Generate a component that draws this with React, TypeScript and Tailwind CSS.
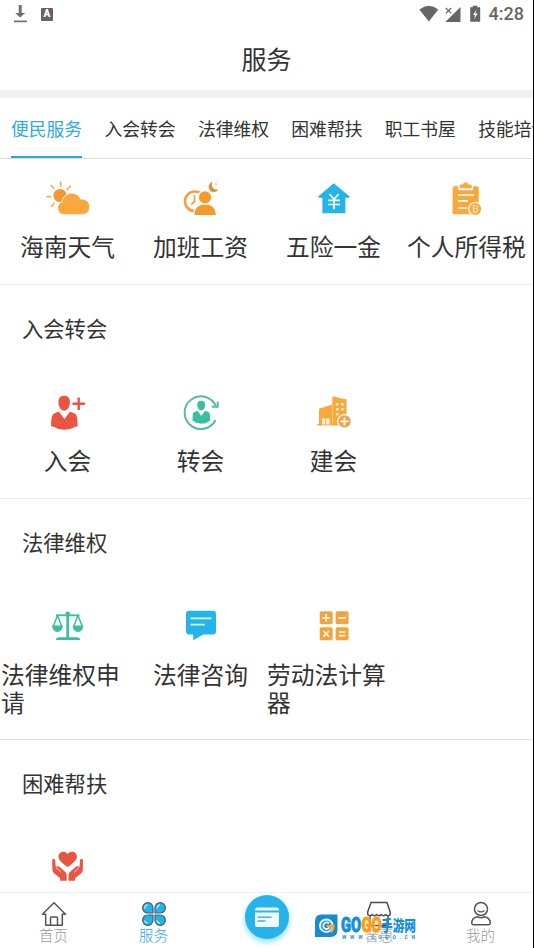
import React, { useState } from "react";

const ORANGE = "#f9a83e";
const RED = "#ea5442";
const GREEN = "#3bbfa0";
const BLUE = "#22b4ea";

const Icon = ({ children }: { children: React.ReactNode }) => (
    <svg viewBox="0 0 44 44" className="h-11 w-11 overflow-visible" fill="none">
        {children}
    </svg>
);

const WeatherIcon = () => (
    <Icon>
        <g stroke="#ecb56c" strokeWidth="1.8">
            <path d="M14.7 4.5v5.5M4.8 8.2l3.4 3.6M24.8 8.8l-4.2 4.2M.3 19.7h5M5 29.8l3.5-3.8" />
        </g>
        <circle cx="14" cy="18.5" r="6.6" fill="#f5992e" />
        <path
            d="M18.5 37.8a6.8 6.8 0 0 1-2.6-13.1C17 19.3 21.3 15.8 26.2 16.1c4.2.2 7.2 2.5 8.6 6 5.2-.6 9 3.3 9 7.8 0 4.6-3.4 7.9-7.8 7.9z"
            fill={ORANGE}
            stroke="white"
            strokeWidth="1"
        />
    </Icon>
);

const OvertimeIcon = () => (
    <Icon>
        <circle cx="15.8" cy="24.3" r="9.8" stroke="#f0a043" strokeWidth="2.6" />
        <path d="M15.5 18v6.5l-3.3 3" stroke="#f0a043" strokeWidth="1.7" />
        <path
            d="M14.7 38.8c0-7.8 4.5-12 11.5-12s11.3 4.2 11.3 12z"
            fill="#f59a2c"
            stroke="white"
            strokeWidth="1.4"
        />
        <circle cx="26" cy="20.4" r="6.8" fill="#f59a2c" stroke="white" strokeWidth="1.4" />
        <path d="M33.5 4.8c-3.3.8-4.8 5-2.8 8.2 2.1 3.2 6.8 2.7 8.4-.6-5 1.2-7.5-3.9-5.6-7.6z" fill="#dd9338" />
        <path d="M37 5.5v3M35.5 7h3" stroke="#eac08a" strokeWidth=".8" />
    </Icon>
);

const FundIcon = () => (
    <Icon>
        <path d="M21.8 6.2 37.6 19.6q.4 1.4-1.2 1.2h-3v15.4h-23V20.8h-3q-1.6.1-1.2-1.2z" fill={BLUE} />
        <path
            d="m17.5 17 4.6 5.2 4.6-5.2M22.1 22.2v10M16.2 23.3H28M16.2 27.5H28"
            stroke="white"
            strokeWidth="1.7"
        />
    </Icon>
);

const TaxIcon = () => (
    <Icon>
        <path
            d="M9.2 9.3h4v2.6q0 1.3 1.3 1.3h12.3q1.3 0 1.3-1.3V9.3h4q1.6 0 1.6 1.6v24.8q0 1.6-1.6 1.6H9.2q-1.6 0-1.6-1.6V10.9q0-1.6 1.6-1.6z"
            fill={ORANGE}
        />
        <path d="M14.7 11.3V8.5q0-1 1-1H18q.4-2.2 2.7-2.2t2.7 2.2h2.3q1 0 1 1v2.8z" fill={ORANGE} />
        <path d="M13 18h16M13 23.8h10M13 31h9" stroke="white" strokeWidth="1.7" />
        <circle cx="30.3" cy="32" r="6.5" fill={ORANGE} stroke="white" strokeWidth="1.2" />
        <path
            d="M28.4 28.7h2.5q1.7 0 1.7 1.5t-1.7 1.6h-2.5 2.7q1.8 0 1.8 1.6t-1.8 1.7h-2.7z"
            stroke="#fde6c4"
            strokeWidth="1.1"
        />
    </Icon>
);

const JoinIcon = () => (
    <Icon>
        <path
            d="M18.2 4.8c3.8 0 6 2.7 5.7 6.7-.1 4.2-2.5 8.3-5.7 8.3s-5.6-4.1-5.7-8.3c-.3-4 1.9-6.7 5.7-6.7z"
            fill={RED}
        />
        <path
            d="M13 20.7 18.5 28l5.4-7.3c3.9 1.2 6.3 2.1 6.8 4.3.7 3 1.1 7 .9 10.3-3.3 1-3.7.8-5 1.7-4.5 2.3-12 2.3-16.5 0-1-.8-1.6-.6-5-1.7-.1-3.3.2-7.3 1-10.3.5-2.2 3-3.1 6.9-4.3z"
            fill={RED}
        />
        <path d="M32.7 6.5v12.4M26.5 12.7h12.4" stroke={RED} strokeWidth="2.4" />
    </Icon>
);

const TransferIcon = () => (
    <Icon>
        <path d="M36.5 29A16.3 16.3 0 1 1 37 15.5" stroke="#5cb9a0" strokeWidth="2" />
        <path d="M32.7 15.8h6V10.6" stroke="#5cb9a0" strokeWidth="2" />
        <path
            d="M22.2 9.8c2.9 0 4.1 2 3.9 4.5-.1 2.9-1.9 5.2-3.9 5.2s-3.8-2.3-3.9-5.2c-.2-2.5 1-4.5 3.9-4.5z"
            fill={GREEN}
        />
        <path
            d="M18.6 19.7 22.3 25l3.7-5.3c3 .9 4.4 1.5 4.7 3 .5 2.2.5 5 .4 7.1-2.4.8-2 1-3.2 1.7-3 1.6-8.2 1.6-11.2 0-1-.7-.7-.9-3.1-1.7-.1-2.1 0-4.9.4-7.1.4-1.5 1.6-2.1 4.6-3z"
            fill={GREEN}
        />
    </Icon>
);

const BuildIcon = () => (
    <Icon>
        <path d="M5.4 34.5V33H7V17.8l13.3-4.2V5.3l14.3 3.2v26z" fill={ORANGE} />
        <path d="M20.6 13.5v20" stroke="#fcd9a6" strokeWidth=".7" />
        <path d="M10 27.5h3.3v6H10zM14.2 27.5h3.3v6h-3.3z" fill="#fff3df" />
        <path
            d="M24 12h2.6v2.6H24zM29 12h2.6v2.6H29zM24 17h2.6v2.6H24zM29 17h2.6v2.6H29zM24 22h2.6v2.6H24z"
            fill="#ffe9c8"
        />
        <circle cx="32.5" cy="30.4" r="6.8" fill="#f0a344" stroke="white" strokeWidth="1.2" />
        <path d="M32.5 26.4v8M28.5 30.4h8" stroke="white" strokeWidth="1.7" />
    </Icon>
);

const ScaleIcon = () => (
    <Icon>
        <path d="M10 35q0-2.8 3-2.8h18q3 0 3 2.8z" fill={GREEN} />
        <path d="M21.7 7v26" stroke={GREEN} strokeWidth="2.8" />
        <circle cx="21.7" cy="8.8" r="2.3" fill={GREEN} />
        <path d="M10 10.3h23.5" stroke={GREEN} strokeWidth="1.9" />
        <path
            d="M11.5 10.5 7.2 21.5M11.5 10.5l4.3 11M32 10.5l-4.3 11M32 10.5l4.3 11"
            stroke={GREEN}
            strokeWidth="1.5"
        />
        <path d="M6.2 20.5h10.6c0 8.6-10.6 8.6-10.6 0zM26.7 20.5h10.6c0 8.6-10.6 8.6-10.6 0z" fill={GREEN} />
    </Icon>
);

const ConsultIcon = () => (
    <Icon>
        <path
            d="M10 5.8h24q3 0 3 3v17.7q0 3-3 3h-9.5L14.2 35.3v-5.8H10q-3 0-3-3V8.8q0-3 3-3z"
            fill={BLUE}
        />
        <path d="M11.5 13.3h21M11.5 19.6h14.3" stroke="#dff5ff" strokeWidth="1.8" />
    </Icon>
);

const CalculatorIcon = () => (
    <Icon>
        <g fill="#f0a540">
            <rect x="7.7" y="6.3" width="13" height="13" rx="1.8" />
            <rect x="23.6" y="6.3" width="13" height="13" rx="1.8" />
            <rect x="7.7" y="22.3" width="13" height="13" rx="1.8" />
            <rect x="23.6" y="22.3" width="13" height="13" rx="1.8" />
        </g>
        <path
            d="M14.2 9v7.6M10.4 12.8H18M26.3 12.8h7.6M11.5 26l5.4 5.6M16.9 26l-5.4 5.6M27 27.2h6.3M27 30.6h6.3"
            stroke="#fff3e0"
            strokeWidth="1.7"
        />
    </Icon>
);

const CareIcon = () => (
    <Icon>
        <path
            d="M21.7 21C16.5 17.3 12.5 14.2 12.5 10.4c0-4.9 6.4-6.4 9.2-2.5 2.8-3.9 9.2-2.4 9.2 2.5 0 3.8-4 6.900-9.200 10.600z"
            fill={RED}
        />
        <path
            d="M7.7 13c1.2 0 1.5.7 1.5 1.6l.5 6.2c2.2-1.3 3.5-.5 5.4 1.4l3.900 3.600c1.300 1.200 1.700 2 1.700 3.700v5.200h-6.500v-2.500l-6-4.800c-1.300-1-1.700-1.800-1.800-3.300l-.2-9.300c0-1.100.3-1.800 1.500-1.800z"
            fill={RED}
        />
        <path
            d="M35.5 13c-1.2 0-1.5.7-1.5 1.6l-.5 6.2c-2.2-1.3-3.5-.5-5.4 1.4l-3.900 3.600c-1.300 1.200-1.700 2-1.700 3.700v5.200H29v-2.500l6-4.800c1.300-1 1.700-1.800 1.800-3.300l.2-9.300c0-1.100-.3-1.800-1.500-1.800z"
            fill={RED}
        />
        <path d="m10 21.500 5 4.800M33.200 21.500l-5 4.800" stroke="white" strokeWidth=".7" />
    </Icon>
);

const tabs = ["便民服务", "入会转会", "法律维权", "困难帮扶", "职工书屋", "技能培训"];

const sections = [
    {
        title: "",
        items: [
            { label: "海南天气", icon: <WeatherIcon /> },
            { label: "加班工资", icon: <OvertimeIcon /> },
            { label: "五险一金", icon: <FundIcon /> },
            { label: "个人所得税", icon: <TaxIcon /> },
        ],
    },
    {
        title: "入会转会",
        items: [
            { label: "入会", icon: <JoinIcon /> },
            { label: "转会", icon: <TransferIcon /> },
            { label: "建会", icon: <BuildIcon /> },
        ],
    },
    {
        title: "法律维权",
        items: [
            { label: "法律维权申请", icon: <ScaleIcon /> },
            { label: "法律咨询", icon: <ConsultIcon /> },
            { label: "劳动法计算器", icon: <CalculatorIcon /> },
        ],
    },
    {
        title: "困难帮扶",
        items: [{ label: "", icon: <CareIcon /> }],
    },
];

const StatusBar = () => (
    <div className="flex h-7 shrink-0 items-center justify-between pr-[9px] pl-[13px] text-[#666]">
        <div className="flex items-center gap-[13px]">
            <svg width="15" height="20" viewBox="0 0 15 20" fill="#707070">
                <path d="M5.7 1h3v8h3.5L7.2 13.5 2.2 9h3.500zM1 16.500h13v1.700H1z" />
            </svg>
            <span className="flex h-[13px] w-3 items-center justify-center rounded-[1px] bg-[#636363] font-['Roboto'] text-[10px] leading-none font-black text-white">
                A
            </span>
        </div>
        <div className="flex items-center">
            <svg width="62" height="20" viewBox="0 0 62 20" fill="#666">
                <path d="M.3 5.500Q10-1.800 19.300 5.500L9.900 17.500z" />
                <path d="M41.500 3v15H26.300z" />
                <path d="m26.800 4 5.400 5.400M32.200 4l-5.400 5.400" stroke="#666" strokeWidth="1.2" />
                <path d="M51.200 3.200h2.600V1.800h4.600v1.400h2.800v14.600h-10z" />
                <path d="M57.500 5.500 54 11h2.200L55 15.500l3.600-6h-2.200z" fill="white" />
            </svg>
            <span className="ml-2 font-['Roboto'] text-[18px] leading-none font-medium">4:28</span>
        </div>
    </div>
);

const HomeIcon = () => (
    <svg width="26" height="26" viewBox="0 0 26 26" fill="none" stroke="#555" strokeWidth="1.5" strokeLinejoin="round">
        <path d="M4.7 13.2H1.500L13 1.800l11.500 11.400h-3.200v11H4.700zM9.500 24v-7q0-1 1-1h5q1 0 1 1v7" />
    </svg>
);

const CloverIcon = () => (
    <svg width="26" height="26" viewBox="0 0 26 26" fill={BLUE} stroke="#4c5d69" strokeWidth="1.2">
        <path d="M12 12H6.800A5.200 5.200 0 1 1 12 6.800zM14 12h5.200A5.200 5.200 0 1 0 14 6.800zM12 14H6.800A5.200 5.200 0 1 0 12 19.200zM14 14h5.200A5.200 5.200 0 1 1 14 19.200z" />
        <path
            d="M3.700 7.500q0-3 3-3.600M16 7.500q0-3 3-3.600M3.700 19.500q.3 2.300 3 2.700M16 19.500q.3 2.300 3 2.700"
            fill="none"
            stroke="#c5ecfa"
            strokeWidth="1.3"
        />
    </svg>
);

const ShopIcon = () => (
    <svg width="26" height="26" viewBox="0 0 26 26" fill="none" stroke="#4d4d4d" strokeWidth="1.5" strokeLinejoin="round">
        <path d="M5 1.500h16l3.200 9.500v2.500q-2.200 2.500-4.500 0-2.200 2.500-4.500 0-2.200 2.500-4.500 0-2.200 2.500-4.500 0-2.200 2.500-4.500 0V11zM4 15.500v9h18v-9" />
    </svg>
);

const UserIcon = () => (
    <svg width="26" height="26" viewBox="0 0 26 26" fill="none" stroke="#555" strokeWidth="1.5" strokeLinejoin="round">
        <circle cx="13" cy="8" r="6.500" />
        <path d="M9.500 9.500q3.500 2.800 7 0" strokeWidth="1.1" />
        <path d="M9.200 15.700q-5.500 1.500-5.500 6.300 0 1.700 1.700 1.700h15.200q1.700 0 1.700-1.700 0-4.800-5.500-6.300-3.800 2.200-7.600 0z" />
    </svg>
);

const NavItem = ({ icon, label, active = false }: { icon: React.ReactNode; label: string; active?: boolean }) => (
    <button className="flex flex-col items-center pt-2">
        {icon}
        <span className={`-mt-px text-[14.5px] leading-[18px] font-light ${active ? "text-[#22a7dc]" : "text-[#999]"}`}>
            {label}
        </span>
    </button>
);

const Watermark = () => (
    <svg
        className="absolute top-[20px] left-[314px]"
        width="104"
        height="28"
        viewBox="0 0 104 28"
        fontFamily="Roboto, Noto Sans CJK SC, sans-serif"
        fontWeight="900"
    >
        <path d="M7.500 1.500H23.500v15.500q0 7-7 7H1V8.500q0-7 6.500-7z" fill="#168bd0" />
        <circle cx="12.300" cy="12.700" r="6.300" fill="none" stroke="#e9f7ff" strokeWidth="2" />
        <path d="M15 10.500a3.300 3.300 0 1 0 .5 3.700" fill="none" stroke="#e9f7ff" strokeWidth="1.8" />
        <path d="M12.500 13h7q0 4-3 6" fill="none" stroke="#ffa51f" strokeWidth="2.3" />
        <text x="27" y="18.500" fontSize="20" fill="#168fdb" stroke="#168fdb" strokeWidth=".9" textLength="20" lengthAdjust="spacingAndGlyphs">
            GO
        </text>
        <text x="47.500" y="18.500" fontSize="20" fill="#ff9c12" stroke="#ff9c12" strokeWidth=".9" textLength="20" lengthAdjust="spacingAndGlyphs">
            GO
        </text>
        <text x="67" y="17.500" fontSize="15" fill="#168fdb" textLength="35" lengthAdjust="spacingAndGlyphs">
            手游网
        </text>
        <text x="28" y="25.500" fontSize="5" fontWeight="bold" fill="#2f8fd0" textLength="73">
            WWW.GOGO.CN
        </text>
    </svg>
);

const App = () => {
    const [activeTab, setActiveTab] = useState(0);
    return (
        <div className="flex h-[948px] w-[534px] flex-col overflow-hidden border-r border-black bg-white font-['Noto_Sans_CJK_SC',sans-serif] text-[#333]">
            <StatusBar />
            <header className="flex h-[62px] shrink-0 items-center justify-center pb-px">
                <h1 className="text-[25px] leading-none">服务</h1>
            </header>
            <div className="h-2 shrink-0 bg-[#f1f1f1]" />
            <nav className="flex h-[61px] shrink-0 gap-[22.3px] overflow-hidden border-b border-[#dedede] pl-[11px]">
                {tabs.map((tab, i) => (
                    <button
                        key={tab}
                        onClick={() => setActiveTab(i)}
                        className={`shrink-0 border-b-2 pt-[3px] text-[17.8px] leading-none whitespace-nowrap ${
                            i === activeTab ? "border-[#2fa4d8] text-[#33aadd]" : "border-transparent"
                        }`}
                    >
                        {tab}
                    </button>
                ))}
            </nav>
            <main className="min-h-0 flex-1 overflow-hidden">
                {sections.map(({ title, items }) => (
                    <section key={title} className="border-b border-[#ebebeb] pb-6 nth-3:border-[#dedede] nth-3:pb-[23px]">
                        {title && (
                            <h2 className="flex h-[88px] items-center pb-[3px] pl-[22px] text-[21.3px] leading-none">
                                {title}
                            </h2>
                        )}
                        <div className="grid grid-cols-4 pt-[18px] pl-px">
                            {items.map(({ label, icon }, i) => (
                                <div key={i} className="flex flex-col items-center">
                                    {icon}
                                    {label && <span className="mt-[11px] text-[23.75px] leading-7">{label}</span>}
                                </div>
                            ))}
                        </div>
                    </section>
                ))}
            </main>
            <footer className="relative grid h-14 shrink-0 grid-cols-[107px_93px_134px_90px_113px] border-t border-[#eee] bg-white">
                <NavItem icon={<HomeIcon />} label="首页" />
                <NavItem icon={<CloverIcon />} label="服务" active />
                <button className="mt-[2px] flex h-11 w-11 items-center justify-center justify-self-center rounded-full bg-[#26b3e9] shadow-[0_3px_6px_#8fdcf8]">
                    <svg width="26" height="22" viewBox="0 0 26 22" fill="#f2fcff">
                        <path d="M3.500 1.500h19q2.500 0 2.500 3H1q0-3 2.500-3z" />
                        <path d="M1 6.500h24V19q0 2-2 2H3q-2 0-2-2z" />
                        <path d="M3.500 11.200h14M3.500 15h8" stroke="#3fb5df" strokeWidth="1.5" />
                    </svg>
                </button>
                <NavItem icon={<ShopIcon />} label="普惠" />
                <NavItem icon={<UserIcon />} label="我的" />
                <Watermark />
            </footer>
        </div>
    );
};

export default App;
